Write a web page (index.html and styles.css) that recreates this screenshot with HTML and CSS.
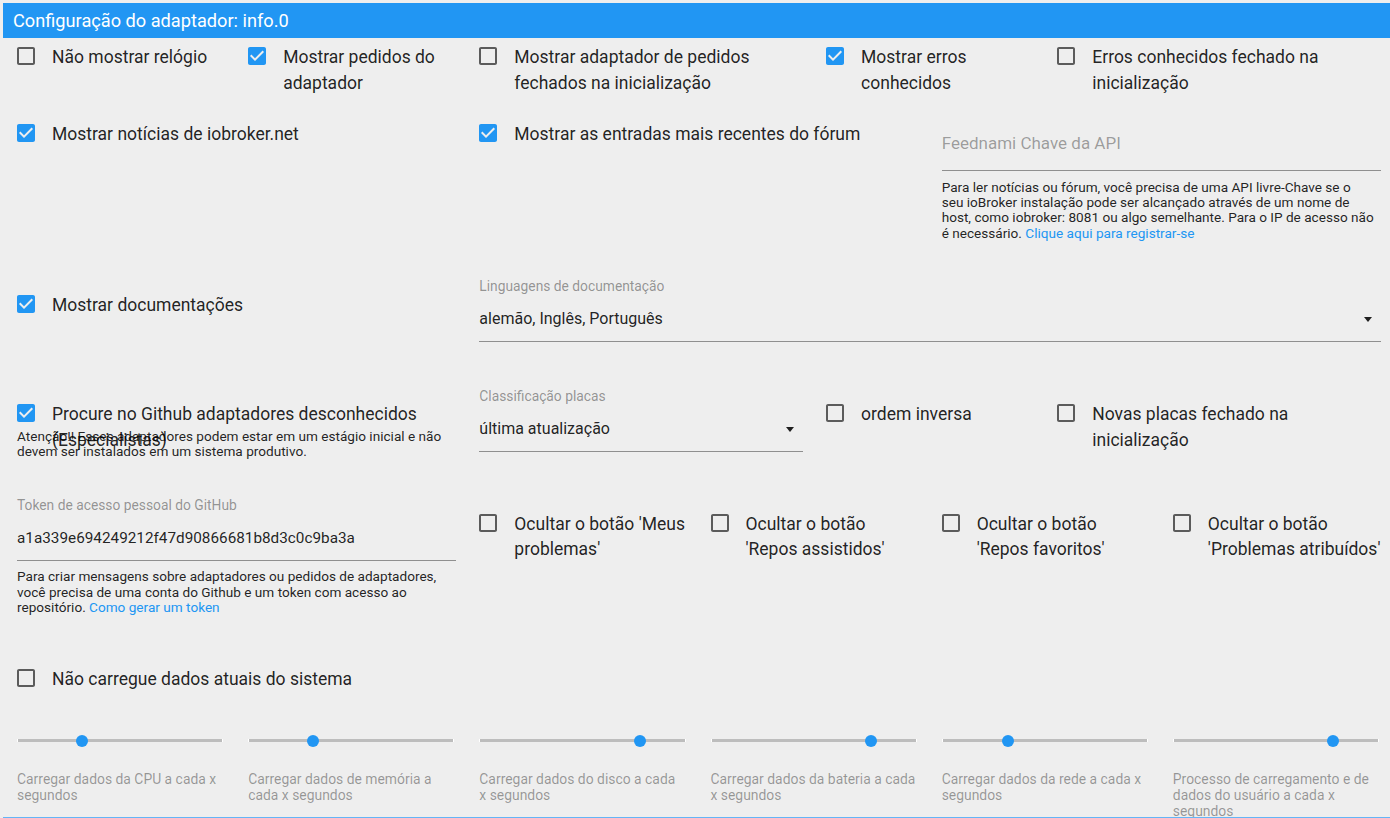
FILE: index.html
```html
<!DOCTYPE html>
<html lang="pt">
<head>
<meta charset="utf-8">
<title>Configuração do adaptador: info.0</title>
<link rel="stylesheet" href="styles.css">
</head>
<body>
<svg class="defs" aria-hidden="true">
  <symbol id="cb-off" viewBox="0 0 24 24"><path d="M19 5v14H5V5h14m0-2H5c-1.1 0-2 .9-2 2v14c0 1.1.9 2 2 2h14c1.1 0 2-.9 2-2V5c0-1.1-.9-2-2-2z"/></symbol>
  <symbol id="cb-on" viewBox="0 0 24 24"><path d="M19 3H5c-1.11 0-2 .9-2 2v14c0 1.1.89 2 2 2h14c1.11 0 2-.9 2-2V5c0-1.1-.89-2-2-2zm-9 14l-5-5 1.41-1.41L10 14.17l7.59-7.59L19 8l-9 9z"/></symbol>
</svg>
<div class="page">
  <header class="title">Configuração do adaptador: info.0</header>

  <div class="row r1">
    <div class="cell s2"><label class="cb"><svg class="box off"><use href="#cb-off"/></svg><span class="cb-text">Não mostrar relógio</span></label></div>
    <div class="cell s2"><label class="cb"><svg class="box on"><use href="#cb-on"/></svg><span class="cb-text">Mostrar pedidos do adaptador</span></label></div>
    <div class="cell s3"><label class="cb"><svg class="box off"><use href="#cb-off"/></svg><span class="cb-text">Mostrar adaptador de pedidos fechados na inicialização</span></label></div>
    <div class="cell s2"><label class="cb"><svg class="box on"><use href="#cb-on"/></svg><span class="cb-text">Mostrar erros conhecidos</span></label></div>
    <div class="cell s3"><label class="cb"><svg class="box off"><use href="#cb-off"/></svg><span class="cb-text">Erros conhecidos fechado na inicialização</span></label></div>
  </div>

  <div class="row r2">
    <div class="cell s4"><label class="cb"><svg class="box on"><use href="#cb-on"/></svg><span class="cb-text">Mostrar notícias de iobroker.net</span></label></div>
    <div class="cell s4"><label class="cb"><svg class="box on"><use href="#cb-on"/></svg><span class="cb-text">Mostrar as entradas mais recentes do fórum</span></label></div>
    <div class="cell s4">
      <div class="input plain"><span class="placeholder">Feednami Chave da API</span></div>
      <p class="helper">Para ler notícias ou fórum, você precisa de uma API livre-Chave se o<br>seu ioBroker instalação pode ser alcançado através de um nome de<br>host, como iobroker: 8081 ou algo semelhante. Para o IP de acesso não<br>é necessário. <a class="link" href="#">Clique aqui para registrar-se</a></p>
    </div>
  </div>

  <div class="row r3">
    <div class="cell s4 offset"><label class="cb"><svg class="box on"><use href="#cb-on"/></svg><span class="cb-text">Mostrar documentações</span></label></div>
    <div class="cell s8">
      <div class="field-label">Linguagens de documentação</div>
      <div class="input select"><span class="value">alemão, Inglês, Português</span><span class="arrow"></span></div>
    </div>
  </div>

  <div class="row r4">
    <div class="cell s4 offset-sm">
      <label class="cb cb-fixed"><svg class="box on"><use href="#cb-on"/></svg><span class="cb-text">Procure no Github adaptadores desconhecidos (Especialistas)</span></label>
      <p class="helper attention">Atenção!! Esses adaptadores podem estar em um estágio inicial e não devem ser instalados em um sistema produtivo.</p>
    </div>
    <div class="cell s3">
      <div class="field-label">Classificação placas</div>
      <div class="input select"><span class="value">última atualização</span><span class="arrow"></span></div>
    </div>
    <div class="cell s2 offset-sm"><label class="cb"><svg class="box off"><use href="#cb-off"/></svg><span class="cb-text">ordem inversa</span></label></div>
    <div class="cell s3 offset-sm"><label class="cb"><svg class="box off"><use href="#cb-off"/></svg><span class="cb-text">Novas placas fechado na inicialização</span></label></div>
  </div>

  <div class="row r5">
    <div class="cell s4">
      <div class="field-label">Token de acesso pessoal do GitHub</div>
      <div class="input"><span class="value token">a1a339e694249212f47d90866681b8d3c0c9ba3a</span></div>
      <p class="helper">Para criar mensagens sobre adaptadores ou pedidos de adaptadores, você precisa de uma conta do Github e um token com acesso ao repositório. <a class="link" href="#">Como gerar um token</a></p>
    </div>
    <div class="cell s2 offset"><label class="cb"><svg class="box off"><use href="#cb-off"/></svg><span class="cb-text">Ocultar o botão 'Meus problemas'</span></label></div>
    <div class="cell s2 offset"><label class="cb"><svg class="box off"><use href="#cb-off"/></svg><span class="cb-text">Ocultar o botão 'Repos assistidos'</span></label></div>
    <div class="cell s2 offset"><label class="cb"><svg class="box off"><use href="#cb-off"/></svg><span class="cb-text">Ocultar o botão 'Repos favoritos'</span></label></div>
    <div class="cell s2 offset"><label class="cb"><svg class="box off"><use href="#cb-off"/></svg><span class="cb-text">Ocultar o botão 'Problemas atribuídos'</span></label></div>
  </div>

  <div class="row r6">
    <div class="cell s12"><label class="cb"><svg class="box off"><use href="#cb-off"/></svg><span class="cb-text">Não carregue dados atuais do sistema</span></label></div>
  </div>

  <div class="row r7">
    <div class="cell s2 sl-cell">
      <div class="slider"><div class="track"></div><div class="thumb" style="left:31.5%"></div></div>
      <div class="sl-label">Carregar dados da CPU a cada x segundos</div>
    </div>
    <div class="cell s2 sl-cell">
      <div class="slider"><div class="track"></div><div class="thumb" style="left:31.5%"></div></div>
      <div class="sl-label">Carregar dados de memória a cada x segundos</div>
    </div>
    <div class="cell s2 sl-cell">
      <div class="slider"><div class="track"></div><div class="thumb" style="left:78%"></div></div>
      <div class="sl-label">Carregar dados do disco a cada x segundos</div>
    </div>
    <div class="cell s2 sl-cell">
      <div class="slider"><div class="track"></div><div class="thumb" style="left:78%"></div></div>
      <div class="sl-label">Carregar dados da bateria a cada x segundos</div>
    </div>
    <div class="cell s2 sl-cell">
      <div class="slider"><div class="track"></div><div class="thumb" style="left:32%"></div></div>
      <div class="sl-label">Carregar dados da rede a cada x segundos</div>
    </div>
    <div class="cell s2 sl-cell">
      <div class="slider"><div class="track"></div><div class="thumb" style="left:77.7%"></div></div>
      <div class="sl-label">Processo de carregamento e de dados do usuário a cada x segundos</div>
    </div>
  </div>
</div>
<div class="bottom-rule"></div>
</body>
</html>
```

FILE: styles.css
```css
* { box-sizing: border-box; }

html, body { margin: 0; padding: 0; }

body {
  width: 1390px;
  height: 818px;
  overflow: hidden;
  background: #eeeeee;
  font-family: Roboto, "Noto Sans", sans-serif;
  color: rgba(0, 0, 0, 0.87);
}

.defs { position: absolute; width: 0; height: 0; overflow: hidden; }

.page { padding: 3px 0 0 3px; }

.title {
  height: 35px;
  line-height: 35px;
  padding-left: 10px;
  background: #2196f3;
  color: #ffffff;
  font-size: 18.2px;
}

.row {
  display: grid;
  grid-template-columns: repeat(12, minmax(0, 1fr));
  align-items: start;
}

.r1 { margin-top: 6px; }
.r2 { margin-top: 25px; }
.r3 { margin-top: 38px; }
.r4 { margin-top: 47px; }
.r5 { margin-top: 39px; }
.r6 { margin-top: 51px; }
.r7 { margin-top: 36px; }

.cell { padding: 0 9px 0 14px; min-width: 0; }
.s2 { grid-column: span 2; }
.s3 { grid-column: span 3; }
.s4 { grid-column: span 4; }
.s8 { grid-column: span 8; }
.s12 { grid-column: span 12; }

.offset { padding-top: 13px; }
.offset-sm { padding-top: 12px; }

/* checkbox */
.cb {
  display: flex;
  align-items: flex-start;
  font-size: 17.5px;
  line-height: 25.5px;
  cursor: pointer;
}
.box {
  flex: none;
  width: 24px;
  height: 24px;
  margin: 0 14px 0 -3px;
}
.box.off { fill: rgba(0, 0, 0, 0.62); }
.box.on { fill: #2196f3; }
.cb-text { min-width: 0; padding-top: 1px; }

.cb-fixed { height: 27.5px; }

/* text fields */
.field-label {
  font-size: 13.8px;
  line-height: 15px;
  color: rgba(0, 0, 0, 0.4);
}

.input {
  display: flex;
  align-items: center;
  padding: 15px 0 12px;
  line-height: 20px;
  border-bottom: 1px solid rgba(0, 0, 0, 0.4);
}
.input.plain { padding: 12px 0 17px; }

.placeholder {
  font-size: 17px;
  color: rgba(0, 0, 0, 0.36);
}

.value { flex: 1; font-size: 16px; white-space: nowrap; }
.value.token { font-size: 15.3px; }

.arrow {
  flex: none;
  width: 0;
  height: 0;
  margin-right: 9px;
  border-left: 4px solid transparent;
  border-right: 4px solid transparent;
  border-top: 5px solid rgba(0, 0, 0, 0.87);
}

.helper {
  margin: 8.5px 0 0;
  font-size: 13.6px;
  line-height: 15.4px;
  color: rgba(0, 0, 0, 0.87);
}
.attention { margin-top: 0; line-height: 15px; }

.link { color: #2196f3; text-decoration: none; }

/* sliders */
.slider {
  position: relative;
  height: 24px;
  padding-top: 10.5px;
  margin-right: 2px;
}
.track {
  height: 3px;
  background: #bdbdbd;
  border-left: 1px solid #ffffff;
  border-right: 1px solid #ffffff;
}
.thumb {
  position: absolute;
  top: 6px;
  width: 12px;
  height: 12px;
  margin-left: -6px;
  border-radius: 50%;
  background: #2196f3;
}

.sl-label {
  margin-top: 18px;
  padding-right: 2px;
  font-size: 13.9px;
  line-height: 16px;
  color: rgba(0, 0, 0, 0.38);
}

.bottom-rule {
  position: fixed;
  left: 3px;
  right: 0;
  bottom: 0;
  height: 1px;
  background: #64b5f6;
}
```
